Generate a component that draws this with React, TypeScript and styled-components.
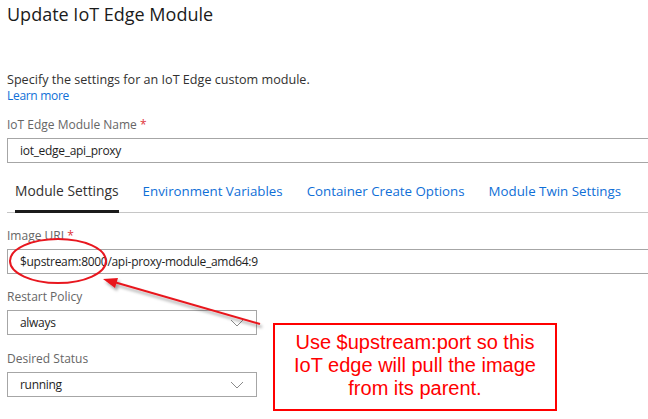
import React from "react";
import styled, { createGlobalStyle } from "styled-components";

const Global = createGlobalStyle`
  html, body { margin: 0; padding: 0; background: #fff; }
  body { font-family: "Open Sans", "Noto Sans", sans-serif; color: #323130; }
`;

const Page = styled.div`
  position: relative;
  width: 648px;
  height: 419px;
  overflow: hidden;
  padding-left: 7px;
  box-sizing: border-box;
`;

const Title = styled.h1`
  margin: 0;
  font-size: 18px;
  line-height: 28px;
  font-weight: 400;
  color: #1b1b1b;
`;

const Intro = styled.p`
  margin: 44px 0 0 0;
  font-size: 12.6px;
  line-height: 16px;
  color: #323130;
`;

const Link = styled.a`
  display: block;
  font-size: 12px;
  letter-spacing: -0.3px;
  color: #0f6fd7;
  text-decoration: none;
`;

const Label = styled.div<{ $top: number }>`
  margin-top: ${(p) => p.$top}px;
  font-size: 12px;
  line-height: 16px;
  color: #666;
`;

const Req = styled.span`
  color: #e0333a;
`;

const Box = styled.div<{ $full?: boolean }>`
  margin-top: 5px;
  box-sizing: border-box;
  width: ${(p) => (p.$full ? "700px" : "250px")};
  height: 25px;
  border: 1px solid #a6a6a6;
  display: flex;
  align-items: center;
  justify-content: space-between;
  padding: 0 12px;
  font-size: 12px;
  letter-spacing: -0.3px;
  color: #1e1e1e;
`;

const Chevron = () => (
  <svg width="14" height="8" viewBox="0 0 14 8">
    <path d="M1 1 L7 7 L13 1" fill="none" stroke="#8a8a8a" strokeWidth="1" />
  </svg>
);

const Tabs = styled.div`
  margin-top: 18px;
  display: flex;
  gap: 24px;
  padding-left: 8px;
  border-bottom: 1px solid #c6c6c6;
  width: 700px;
`;

const Tab = styled.div<{ $active?: boolean }>`
  font-size: ${(p) => (p.$active ? "13.8px" : "13.3px")};
  line-height: 20px;
  padding-bottom: 9px;
  color: ${(p) => (p.$active ? "#323130" : "#0f6fd7")};
  border-bottom: 3px solid ${(p) => (p.$active ? "#1b1b1b" : "transparent")};
  margin-bottom: -1px;
`;

const Overlay = styled.svg`
  position: absolute;
  left: 0;
  top: 0;
  pointer-events: none;
`;

const Callout = styled.div`
  position: absolute;
  left: 273px;
  top: 323px;
  width: 284px;
  height: 88px;
  box-sizing: border-box;
  border: 2px solid #ff0000;
  display: flex;
  align-items: center;
  justify-content: center;
  text-align: center;
  font-family: "Liberation Sans", Arial, sans-serif;
  font-size: 20px;
  line-height: 23px;
  color: #ff0000;
  padding-bottom: 4px;
`;

export default function App() {
  return (
    <>
      <Global />
      <Page>
        <Title>Update IoT Edge Module</Title>
        <Intro>
          Specify the settings for an IoT Edge custom module.
          <Link>Learn more</Link>
        </Intro>

        <Label $top={13}>
          IoT Edge Module Name <Req>*</Req>
        </Label>
        <Box $full>iot_edge_api_proxy</Box>

        <Tabs>
          <Tab $active>Module Settings</Tab>
          <Tab>Environment Variables</Tab>
          <Tab>Container Create Options</Tab>
          <Tab>Module Twin Settings</Tab>
        </Tabs>

        <Label $top={15}>
          Image URI <Req>*</Req>
        </Label>
        <Box $full>$upstream:8000/api-proxy-module_amd64:9</Box>

        <Label $top={15}>Restart Policy</Label>
        <Box>
          always
          <Chevron />
        </Box>

        <Label $top={16}>Desired Status</Label>
        <Box>
          running
          <Chevron />
        </Box>

        <Overlay width="648" height="419">
          <defs>
            <filter id="sh" x="-20%" y="-50%" width="140%" height="200%">
              <feDropShadow dx="2" dy="3" stdDeviation="1.5" floodColor="#000" floodOpacity="0.35" />
            </filter>
          </defs>
          <ellipse cx="58" cy="261" rx="48" ry="22" fill="none" stroke="#e8171f" strokeWidth="2" />
          <g filter="url(#sh)">
            <line x1="260" y1="324" x2="114" y2="282" stroke="#e8171f" strokeWidth="2" />
            <polygon points="103,279 118,278 115,288" fill="#e8171f" />
          </g>
        </Overlay>

        <Callout>
          Use $upstream:port so this
          <br />
          IoT edge will pull the image
          <br />
          from its parent.
        </Callout>
      </Page>
    </>
  );
}
